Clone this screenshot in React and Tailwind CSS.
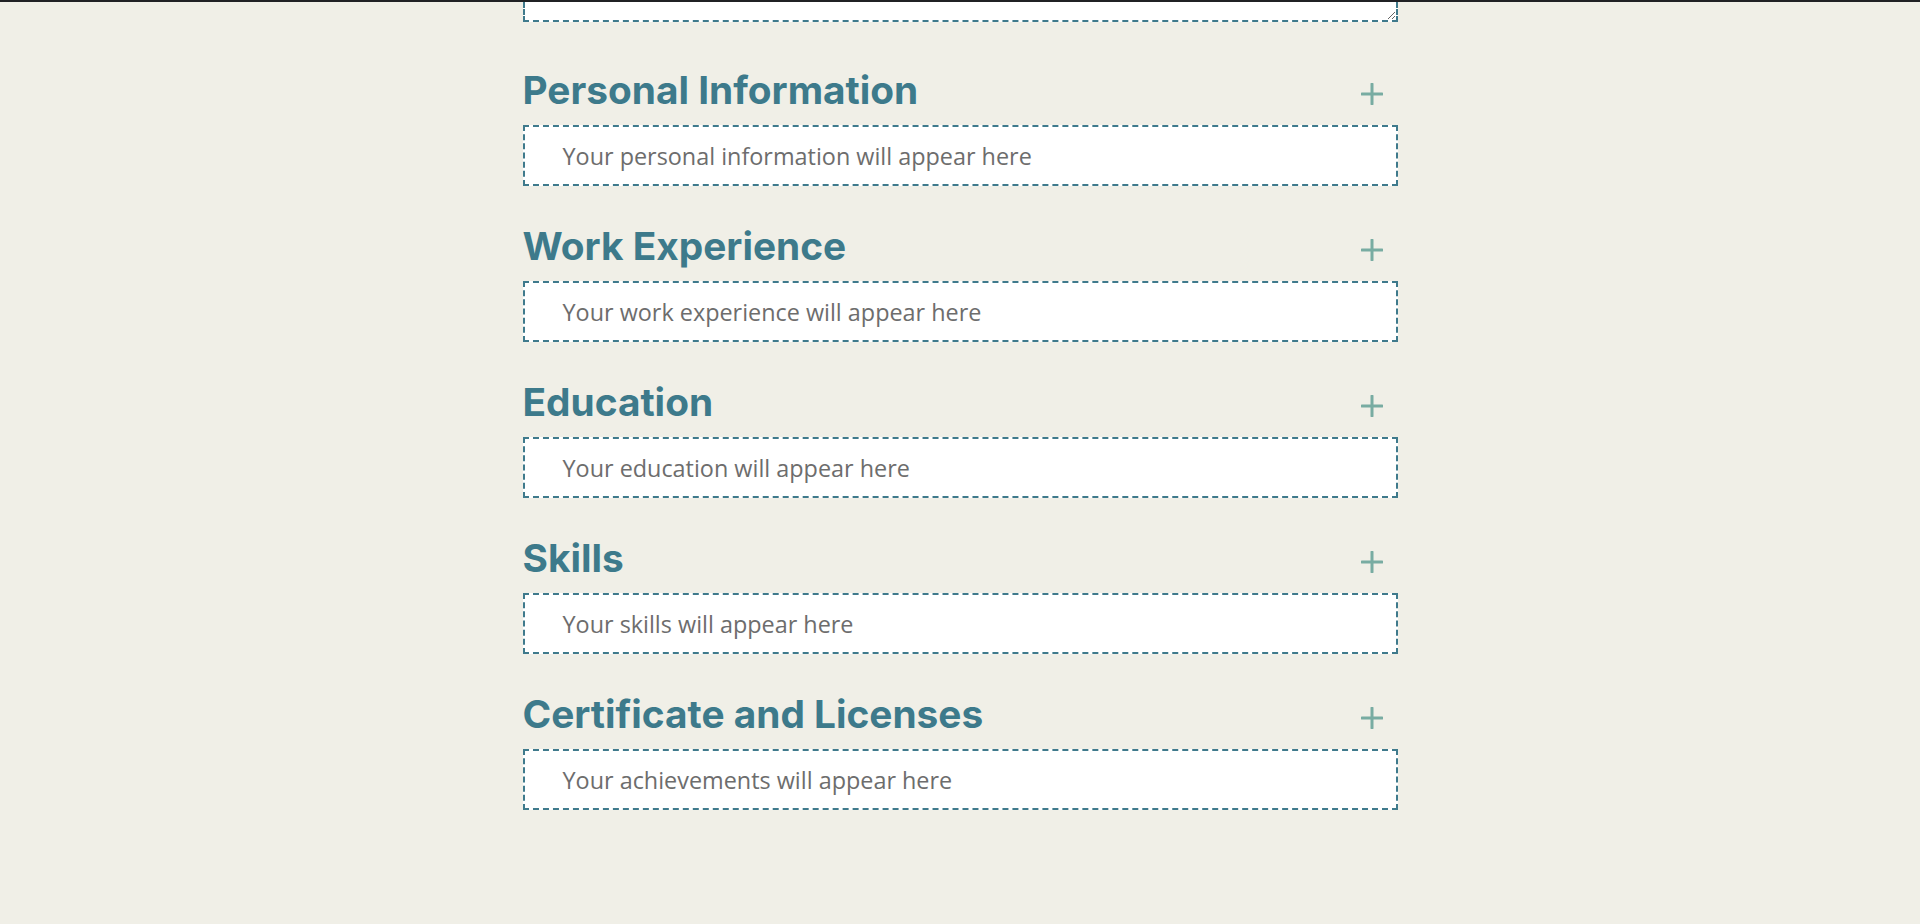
const sections = [
  { title: "Personal Information", hint: "Your personal information will appear here" },
  { title: "Work Experience", hint: "Your work experience will appear here" },
  { title: "Education", hint: "Your education will appear here" },
  { title: "Skills", hint: "Your skills will appear here" },
  { title: "Certificate and Licenses", hint: "Your achievements will appear here" },
];

function PlusIcon() {
  return (
    <svg width="22" height="22" viewBox="0 0 22 22" fill="none">
      <path d="M11 1v20M1 11h20" stroke="#78aca2" strokeWidth="3" strokeLinecap="round" />
    </svg>
  );
}

function Section({ title, hint }) {
  return (
    <section className="mb-[31px]">
      {/* heading row */}
      <div className="h-[64px] flex justify-between items-start">
        <h2 className="mt-[10px] text-[38.8px] leading-none font-bold text-[#3d7a8b] font-['Inter',sans-serif]">
          {title}
        </h2>
        <button className="mt-[22px] mr-[15px]">
          <PlusIcon />
        </button>
      </div>

      <div className="h-[61px] bg-white border-2 border-dashed border-[#3f7a8c] flex items-center pl-[38px] pt-[3px]">
        <p className="text-[23.4px] text-[#6d6d6d] font-['Open_Sans',sans-serif]">{hint}</p>
      </div>
    </section>
  );
}

export default function App() {
  return (
    <div className="min-h-screen bg-[#f0efe7]">
      <div className="h-[2px] bg-[#202124]"></div>

      <div className="w-[875px] mx-auto">
        <textarea className="block w-full h-[20px] bg-white border-2 border-t-0 border-dashed border-[#3f7a8c] outline-none resize-y"></textarea>

        <div className="pt-[39px]">
          {sections.map((s) => (
            <Section key={s.title} title={s.title} hint={s.hint} />
          ))}
        </div>
      </div>
    </div>
  );
}
